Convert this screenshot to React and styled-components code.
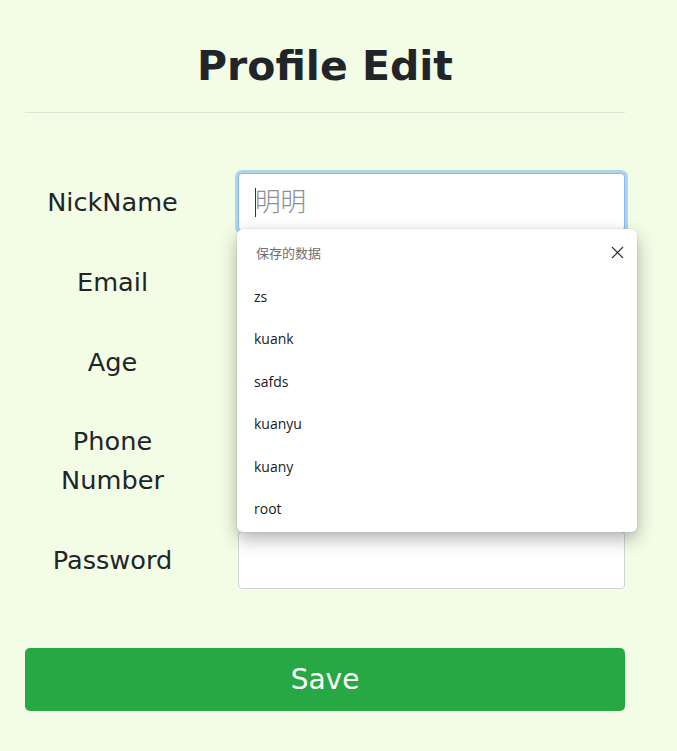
import React from 'react';
import styled, { createGlobalStyle } from 'styled-components';

const GlobalStyle = createGlobalStyle`
  html, body {
    margin: 0;
    padding: 0;
    background: #f3fde6;
  }
  body {
    font-family: "DejaVu Sans", Verdana, sans-serif;
    color: #212529;
  }
`;

const Page = styled.div`
  width: 600px;
  padding: 0 0 40px 25px;
`;

const Title = styled.h1`
  margin: 0;
  padding-top: 42px;
  padding-bottom: 21px;
  height: 49px;
  font-size: 41px;
  line-height: 49px;
  font-weight: 700;
  text-align: center;
  color: #212529;
  border-bottom: 1px solid #dde2d6;
`;

const Form = styled.form`
  display: grid;
  grid-template-columns: 175px 1fr;
  column-gap: 38px;
  row-gap: 22px;
  margin-top: 60px;
`;

const Label = styled.label`
  display: flex;
  align-items: center;
  justify-content: center;
  text-align: center;
  font-size: 25.6px;
  line-height: 39px;
  padding: ${(p) => (p.tall ? '9px 0' : '0')};
  color: #212529;
`;

const Field = styled.div`
  display: flex;
  align-items: center;
  position: relative;
`;

const Input = styled.input`
  width: 100%;
  height: 58px;
  box-sizing: border-box;
  padding: 9px 16px;
  font-size: 25.6px;
  font-family: "DejaVu Sans", "Noto Sans CJK SC", sans-serif;
  color: #212529;
  background: #fff;
  border: 1px solid ${(p) => (p.focused ? '#86b7fe' : '#ced4da')};
  border-radius: 4px;
  outline: none;
  box-shadow: ${(p) => (p.focused ? '0 0 0 3px rgba(120, 180, 225, 0.55)' : 'none')};

  &::placeholder {
    color: #8a8f94;
    font-family: "Noto Sans CJK SC", sans-serif;
    font-weight: 300;
  }
`;

const Caret = styled.span`
  position: absolute;
  left: 17px;
  top: 15px;
  width: 1px;
  height: 29px;
  background: #333;
`;

const Menu = styled.div`
  position: absolute;
  left: -1px;
  top: 56px;
  width: 400px;
  background: #fff;
  border-radius: 6px;
  box-shadow: 0 7px 18px rgba(0, 0, 0, 0.3), 0 0 2px rgba(0, 0, 0, 0.15);
  z-index: 5;
  font-family: "Open Sans", "Noto Sans CJK SC", sans-serif;
  padding-bottom: 2px;
`;

const MenuHeader = styled.div`
  display: flex;
  align-items: center;
  justify-content: space-between;
  height: 46px;
  padding: 0 12px 0 19px;
  font-size: 13px;
  color: #6f6f6f;
  font-family: "Noto Sans CJK SC", sans-serif;
`;

const CloseButton = styled.button`
  display: flex;
  align-items: center;
  justify-content: center;
  width: 16px;
  height: 16px;
  padding: 0;
  border: 0;
  background: transparent;
  color: #333;
`;

const MenuItem = styled.div`
  height: 42.5px;
  display: flex;
  align-items: center;
  padding-left: 17px;
  font-size: 14px;
  color: #1a1a1a;
`;

const SaveButton = styled.button`
  display: block;
  width: 600px;
  height: 63px;
  margin-top: 59px;
  border: 0;
  border-radius: 5px;
  background: #28a745;
  color: #fff;
  font-family: "DejaVu Sans", sans-serif;
  font-size: 28px;
`;

const saved = ['zs', 'kuank', 'safds', 'kuanyu', 'kuany', 'root'];

function CloseIcon() {
  return (
    <svg width="13" height="13" viewBox="0 0 13 13">
      <path d="M1 1 L12 12 M12 1 L1 12" stroke="currentColor" strokeWidth="1.2" fill="none" />
    </svg>
  );
}

export default function App() {
  return (
    <Page>
      <GlobalStyle />
      <Title>Profile Edit</Title>
      <Form onSubmit={(e) => e.preventDefault()}>
        <Label>NickName</Label>
        <Field>
          <Input focused placeholder="明明" />
          <Caret />
          <Menu>
            <MenuHeader>
              <span>保存的数据</span>
              <CloseButton type="button">
                <CloseIcon />
              </CloseButton>
            </MenuHeader>
            {saved.map((s) => (
              <MenuItem key={s}>{s}</MenuItem>
            ))}
          </Menu>
        </Field>

        <Label>Email</Label>
        <Field>
          <Input type="email" />
        </Field>

        <Label>Age</Label>
        <Field>
          <Input type="number" />
        </Field>

        <Label tall>
          Phone
          <br />
          Number
        </Label>
        <Field>
          <Input type="tel" />
        </Field>

        <Label>Password</Label>
        <Field>
          <Input type="password" />
        </Field>
      </Form>
      <SaveButton type="button">Save</SaveButton>
    </Page>
  );
}
